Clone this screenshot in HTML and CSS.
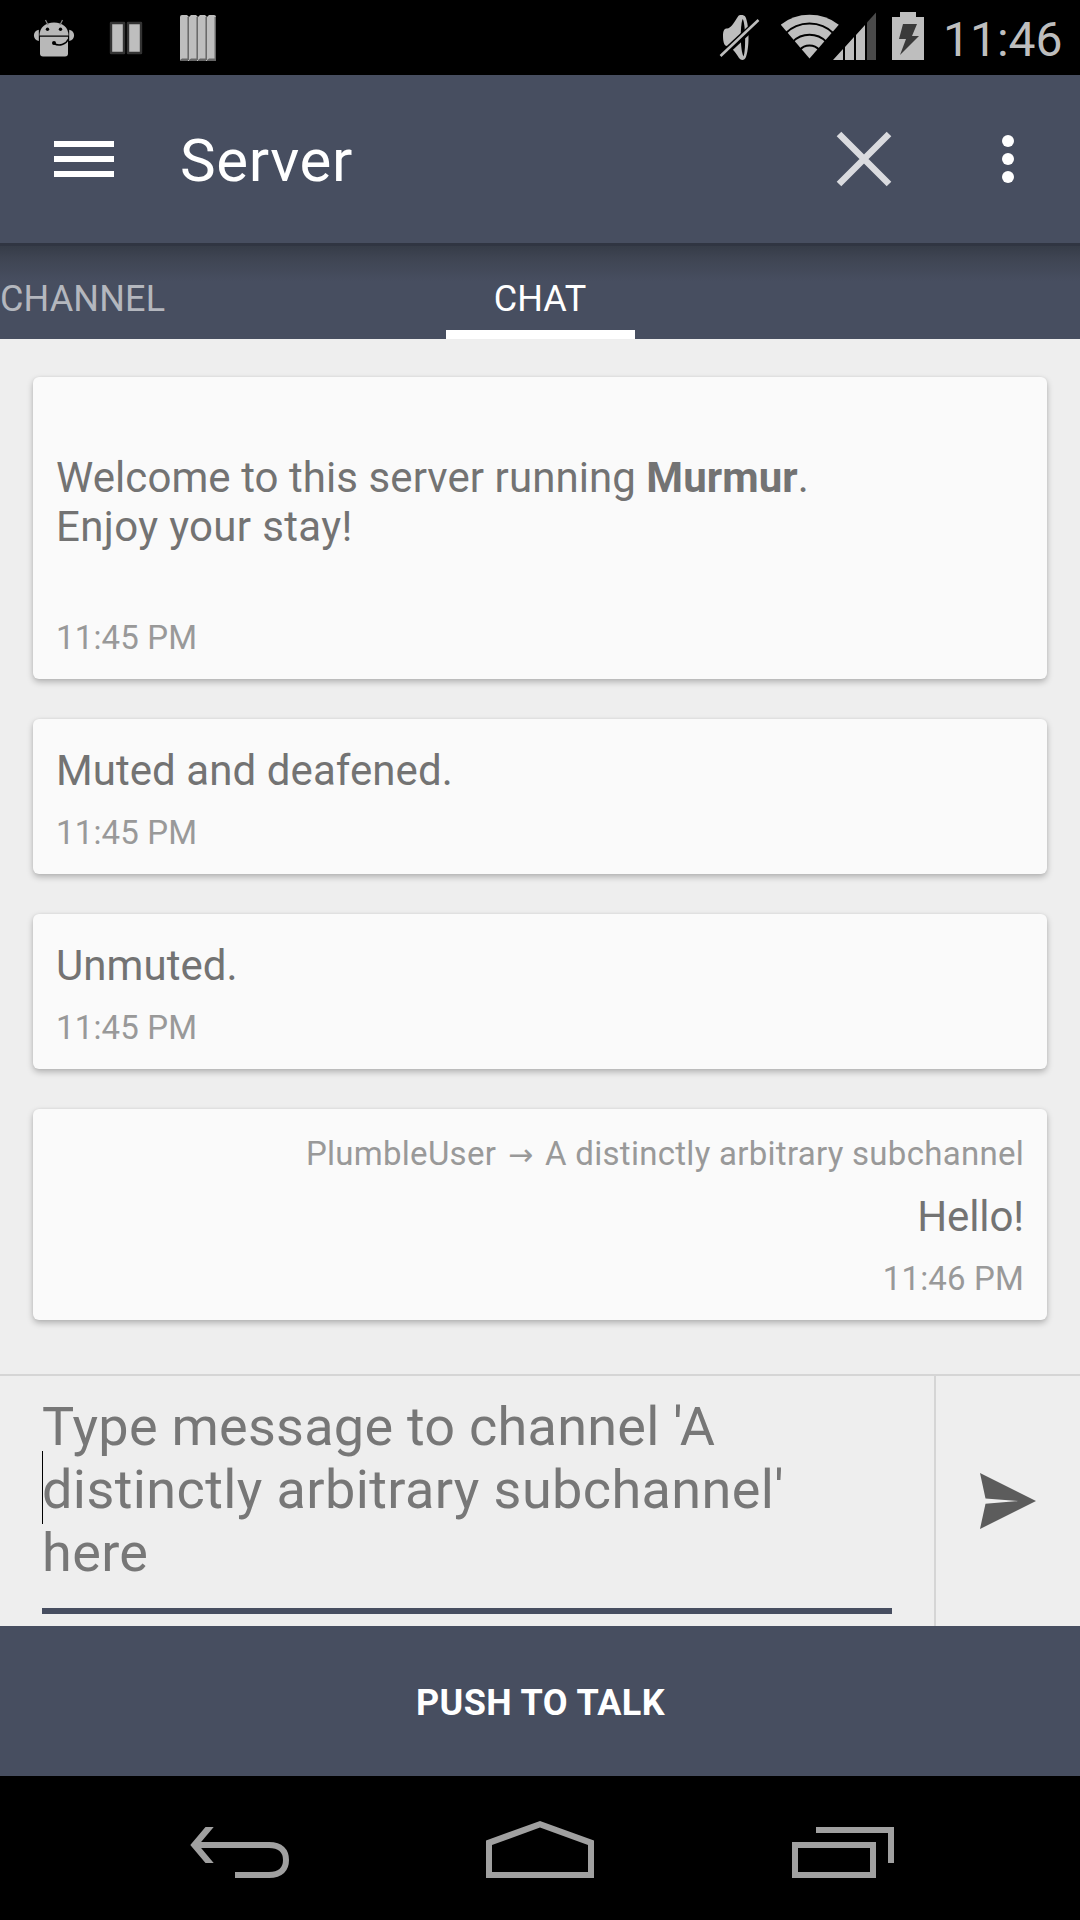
FILE: index.html
```html
<!DOCTYPE html>
<html lang="en">
<head>
<meta charset="utf-8">
<title>Server</title>
<link rel="stylesheet" href="styles.css">
</head>
<body>
<div class="screen">
  <div class="status-bar">
    <div class="status-notifications">
      <svg width="48" height="75" viewBox="30 0 48 75">
        <g fill="#b8b8b8">
          <path d="M39.500 35.500C39.500 27.500 45.500 22.500 54 22.500S68.500 27.500 68.500 35.500Z"/>
          <path d="M40 36.800H68V53.500Q68 56.500 65 56.500H43Q40 56.500 40 53.500Z"/>
          <path d="M38.800 29.800V41C32.300 40 32.300 31 38.800 29.800Z"/>
          <path d="M69.200 29.800V41C75.700 40 75.700 31 69.200 29.800Z"/>
        </g>
        <path d="M45.500 20L48 25M62.500 20L60 25" stroke="#8a8a8a" stroke-width="1.200"/>
        <circle cx="47.500" cy="29.300" r="1.700"/><circle cx="60.500" cy="29.300" r="1.700"/>
        <circle cx="54" cy="43" r="2"/>
        <path d="M54 43.500C59 46.500 66 44.500 68.500 39" fill="none" stroke="#000" stroke-width="1.500"/>
      </svg>
      <svg width="36" height="75" viewBox="108 0 36 75">
        <path d="M111 23H124V53H111ZM128 23H141V53H128Z" fill="#bebebe" stroke="#333" stroke-width="2.400" stroke-linejoin="round"/>
      </svg>
      <svg width="36" height="75" viewBox="180 0 36 75">
        <path d="M180 61V17Q180 15 182 15H187L189 17L191 15H196L198 17L200 15H205L207 17L209 15H214Q216 15 216 17V61Z" fill="#bebebe"/>
        <path d="M188.200 17V60M197.200 17V60M206.200 17V60M215.300 17V60" stroke="#666" stroke-width="1.500"/>
        <path d="M180 61V60L182 58.500H188V61ZM189 61V60L191 58.500H197V61ZM198 61V60L200 58.500H206V61ZM207 61V60L209 58.500H216V61Z" fill="#666"/>
      </svg>
    </div>
    <div class="status-system">
      <svg width="42" height="75" viewBox="719 0 42 75">
        <path d="M723 36C723 31 724 28.500 727 28.500C731 28.500 735 21 738 16.500C739 14.500 744 14.500 745.500 17C749.500 26 749.500 49 745.500 58C744 60.500 741 60.500 739 58C736 53 731 46 727 46C724 46 723 41 723 36Z" fill="#bebebe"/>
        <path d="M742.700 19C745.500 23 746 50 743.500 56.500C740 50 740 25 742.700 19Z"/>
        <path d="M719 58L761 19" stroke="#000" stroke-width="7"/>
        <path d="M720.500 56L758.500 20" stroke="#bebebe" stroke-width="2.600"/>
      </svg>
      <svg width="96" height="75" viewBox="781 0 96 75">
        <path d="M809.500 58.500L780.800 24.700Q793 14.800 809.500 14.800T838.800 24.700Z" fill="#bebebe"/>
        <g fill="none" stroke="#000" stroke-width="2">
          <path d="M785 33.800A34.500 34.500 0 0 1 834 33.800"/>
          <path d="M792.500 42A23.700 23.700 0 0 1 826.500 42"/>
          <path d="M799.500 50.200A13 13 0 0 1 819.500 50.200"/>
        </g>
        <path d="M833 60L843 49V60ZM845 47L854 37V60H845ZM856 35L865 25V60H856Z" fill="#bebebe"/>
        <path d="M867 22.500L876 12.500V60H867Z" fill="#4a4a4a"/>
      </svg>
      <svg width="32" height="75" viewBox="892 0 32 75">
        <path d="M892 17H900V12H916V17H924V60H892Z" fill="#bebebe"/>
        <path d="M903 24H917L912 36H919L900 55L906 39H899Z" fill="#3a3a3a"/>
      </svg>
      <span class="clock">11:46</span>
    </div>
  </div>

  <header class="app-bar">
    <div class="menu-icon"><i></i><i></i><i></i></div>
    <h1 class="title">Server</h1>
    <svg class="close-icon" width="56" height="56" viewBox="0 0 56 56">
      <path d="M3 3L53 53M53 3L3 53" stroke="#dadbdf" stroke-width="6.500"/>
    </svg>
    <div class="overflow-icon"><i></i><i></i><i></i></div>
  </header>

  <nav class="tabs">
    <span class="tab tab-side">CHANNEL</span>
    <span class="tab tab-active">CHAT</span>
    <span class="tab-spacer"></span>
  </nav>

  <main class="messages">
    <article class="card">
      <p class="text"><br>Welcome to this server running <b>Murmur</b>.<br><span class="loose">Enjoy your stay!</span><br><br></p>
      <p class="meta time">11:45 PM</p>
    </article>
    <article class="card">
      <p class="text">Muted and deafened.</p>
      <p class="meta time">11:45 PM</p>
    </article>
    <article class="card">
      <p class="text">Unmuted.</p>
      <p class="meta time">11:45 PM</p>
    </article>
    <article class="card card-own">
      <p class="meta target">PlumbleUser <span class="arrow">→</span> A distinctly arbitrary subchannel</p>
      <p class="text">Hello!</p>
      <p class="meta time">11:46 PM</p>
    </article>
  </main>

  <section class="composer">
    <div class="input-area">
      <div class="input">Type message to channel 'A<br><span class="loose">distinctly arbitrary subchannel'</span><br><span class="loose">here</span><span class="caret"></span></div>
    </div>
    <div class="send">
      <svg width="58" height="58" viewBox="979 1472 58 58">
        <path d="M980 1473L1036 1501L980 1529L985.500 1503.700L1018 1501L985.500 1498.500Z" fill="#5c5c5c"/>
      </svg>
    </div>
  </section>

  <div class="talk">PUSH TO TALK</div>

  <div class="nav-bar">
    <svg width="120" height="144" viewBox="180 1776 120 144">
      <path d="M198 1845H269C281 1845 286 1851 286 1860S281 1875 269 1875H235" fill="none" stroke="#a0a0a0" stroke-width="6"/>
      <path d="M190.300 1845L205.500 1827H213.700L198.600 1845L213.700 1863H205.500Z" fill="#a0a0a0"/>
    </svg>
    <svg width="120" height="144" viewBox="480 1776 120 144">
      <path d="M486 1840.500L540 1821L594 1840.500V1878H486ZM492 1845V1872H588V1845L540 1827.500Z" fill="#a0a0a0" fill-rule="evenodd"/>
    </svg>
    <svg width="120" height="144" viewBox="780 1776 120 144">
      <path d="M792 1842H876V1878H792ZM798 1848V1872H870V1848ZM816 1827H894V1863H888V1833H816Z" fill="#a0a0a0" fill-rule="evenodd"/>
    </svg>
  </div>
</div>
</body>
</html>
```
FILE: styles.css
```css
* { box-sizing: border-box; }

body {
  margin: 0;
  font-family: Roboto, "Liberation Sans", sans-serif;
}

h1, p { margin: 0; font-weight: 400; }

svg { display: block; flex: none; }

.screen {
  width: 1080px;
  height: 1920px;
  display: flex;
  flex-direction: column;
  background: #eee;
  overflow: hidden;
}

.status-bar {
  height: 75px;
  flex: none;
  display: flex;
  justify-content: space-between;
  background: #000;
}

.status-notifications {
  display: flex;
  padding-left: 30px;
  gap: 30px;
}

.status-notifications svg + svg + svg { margin-left: 6px; }

.status-system {
  display: flex;
  padding-right: 18px;
}

.status-system svg { margin-right: 20px; }
.status-system svg:nth-of-type(2) { margin-right: 15px; }
.status-system svg:nth-of-type(3) { margin-right: 19px; }

.clock {
  width: 119px;
  font-size: 48px;
  line-height: 79px;
  color: #bebebe;
  white-space: nowrap;
}

.app-bar {
  height: 168px;
  flex: none;
  display: flex;
  align-items: center;
  padding: 0 66px 0 54px;
  background: #474e60;
}

.menu-icon {
  width: 60px;
  display: grid;
  gap: 9px;
}

.menu-icon i { height: 6px; background: #fff; }

.title {
  flex: 1;
  margin-left: 66px;
  padding-top: 4px;
  font-size: 60px;
  line-height: 70px;
  letter-spacing: .65px;
  color: #fff;
}

.close-icon { margin-right: 110px; }

.overflow-icon { display: grid; gap: 6px; }

.overflow-icon i {
  width: 12px;
  height: 12px;
  border-radius: 50%;
  background: #fff;
}

.tabs {
  height: 96px;
  flex: none;
  display: grid;
  grid-template-columns: 1fr 189px 1fr;
  background: linear-gradient(#303542 0 3px, #363c48 3px, #3f4553 16px, #474e60 38px);
}

.tab {
  padding-top: 14px;
  font-size: 36px;
  line-height: 84px;
  letter-spacing: .15px;
  color: #fff;
}

.tab-side { color: #b4b7be; }

.tab-active {
  height: 96px;
  text-align: center;
  border-bottom: 9px solid #fff;
}

.messages {
  flex: 1;
  display: flex;
  flex-direction: column;
  gap: 40px;
  padding: 38px 33px 0;
}

.card {
  padding: 27px 23px 22px;
  border-radius: 6px;
  background: #fafafa;
  box-shadow: 0 3px 6px rgba(0, 0, 0, .25), 0 0 3px rgba(0, 0, 0, .06);
}

.text {
  font-size: 42px;
  line-height: 49px;
  letter-spacing: .07px;
  color: #737373;
}

.text .loose { letter-spacing: .35px; }

.meta {
  font-size: 33px;
  line-height: 39px;
  letter-spacing: .15px;
  color: #999;
}

.time { margin-top: 18px; }

.card-own {
  padding-top: 25px;
  text-align: right;
}

.card-own .text { letter-spacing: -.1px; }

.target {
  margin-bottom: 19px;
  letter-spacing: .28px;
}

.arrow {
  display: inline-block;
  width: 32px;
  font-family: "DejaVu Sans", sans-serif;
  font-size: 30px;
  line-height: 30px;
  letter-spacing: 0;
  text-align: center;
}

.composer {
  height: 252px;
  flex: none;
  display: grid;
  grid-template-columns: 934px 1fr;
  border-top: 2px solid #d5d5d5;
}

.input-area { padding: 19px 42px 12px; }

.input {
  position: relative;
  height: 219px;
  border-bottom: 6px solid #474e60;
  font-size: 54px;
  line-height: 63px;
  letter-spacing: .25px;
  color: #777;
  white-space: nowrap;
}

.input .loose { letter-spacing: .4px; }

.caret {
  position: absolute;
  left: 0;
  top: 56px;
  width: 1px;
  height: 73px;
  background: #000;
}

.send {
  display: flex;
  align-items: center;
  padding-left: 43px;
  border-left: 2px solid #d5d5d5;
}

.talk {
  height: 150px;
  flex: none;
  padding-left: 1px;
  font-size: 36px;
  font-weight: 700;
  line-height: 154px;
  letter-spacing: .4px;
  text-align: center;
  color: #fff;
  background: #474e60;
}

.nav-bar {
  height: 144px;
  flex: none;
  display: flex;
  justify-content: space-between;
  padding: 0 180px;
  background: #000;
}
```
